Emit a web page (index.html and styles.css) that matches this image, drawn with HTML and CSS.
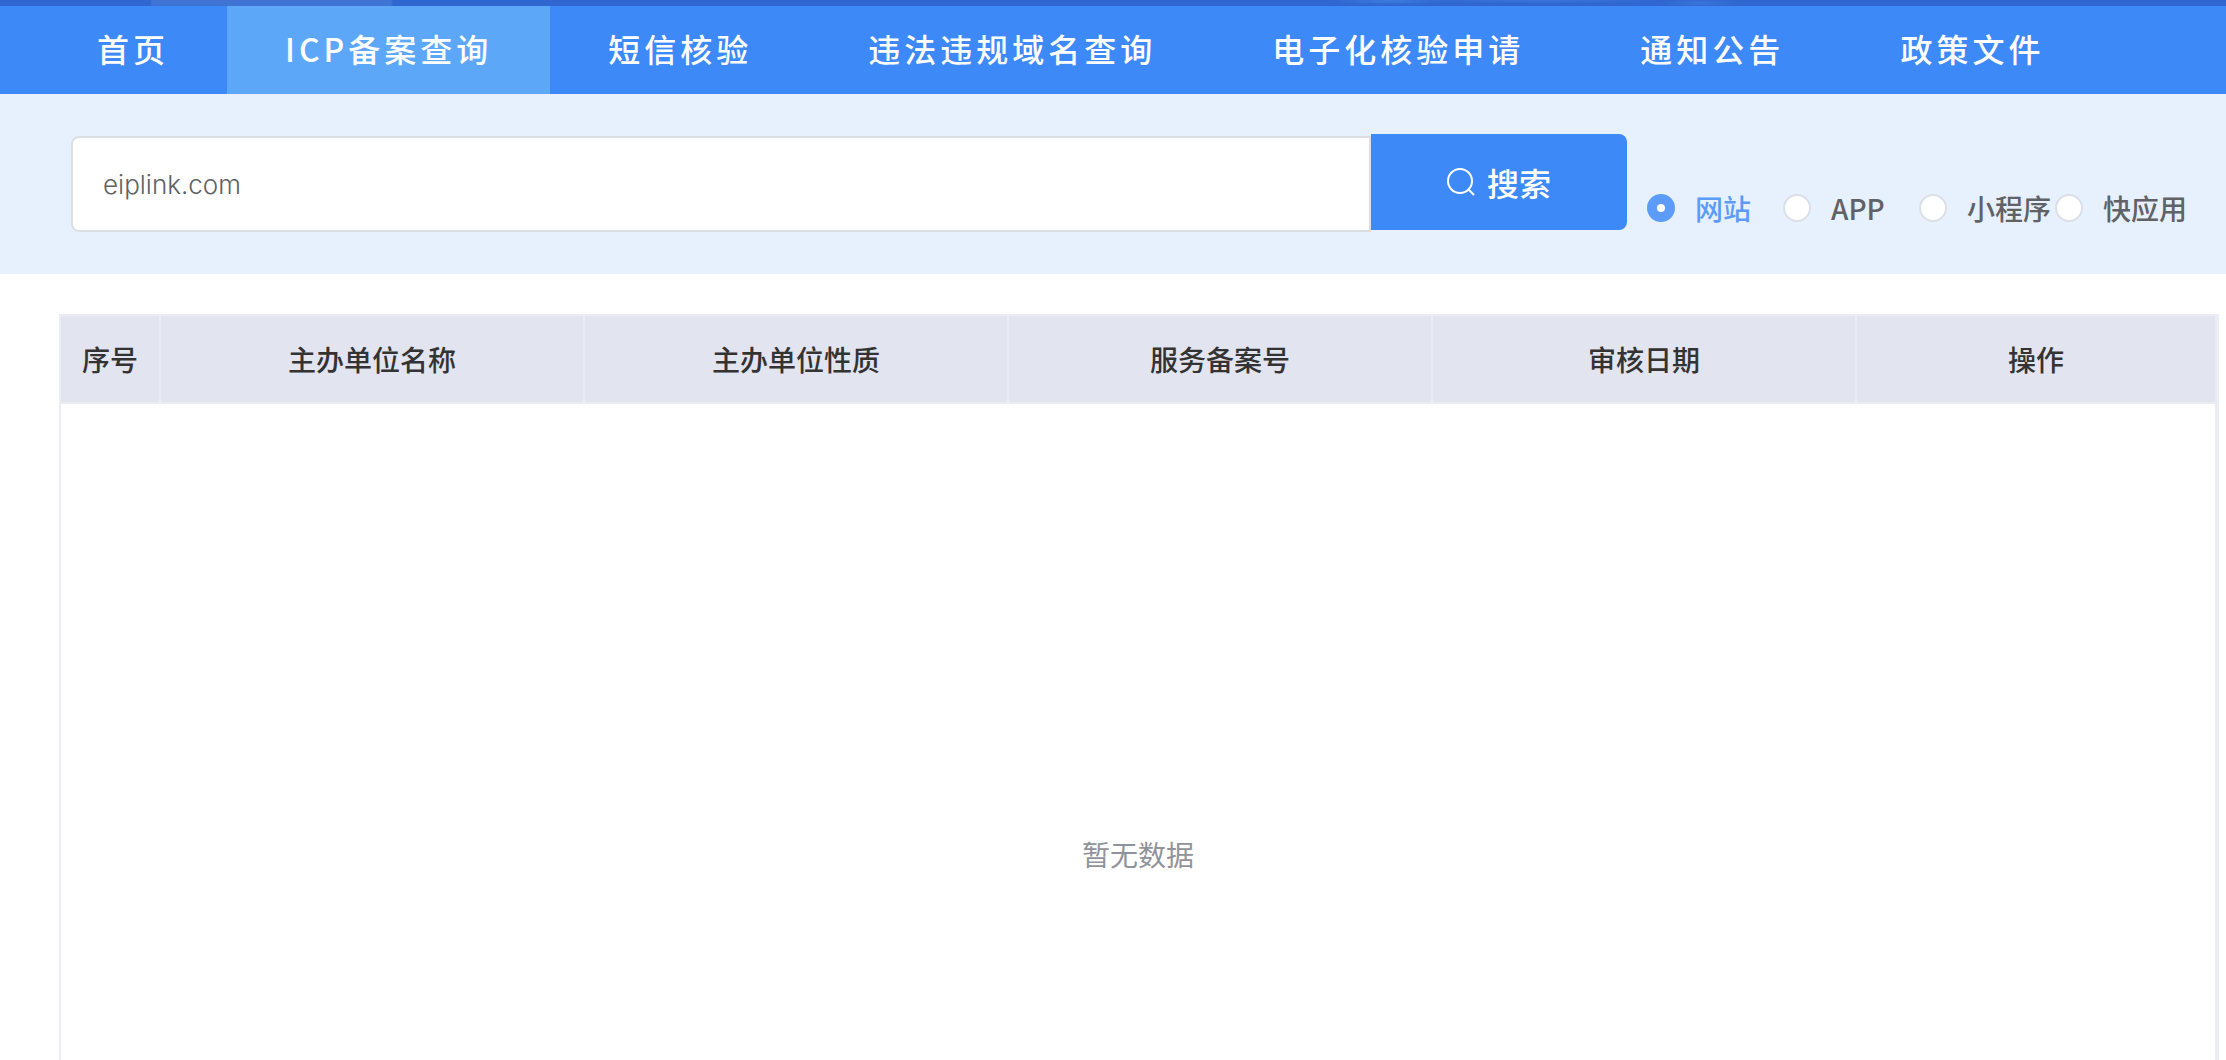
FILE: index.html
```html
<!DOCTYPE html>
<html lang="zh-CN">

<head>
  <meta charset="UTF-8">
  <meta name="viewport" content="width=device-width, initial-scale=1.0">
  <title>ICP备案查询</title>
  <link rel="stylesheet" href="styles.css">
</head>

<body>
  <div class="banner"></div>

  <!-- 导航栏 -->
  <nav class="nav">
    <a href="#" class="nav-item">首页</a>
    <a href="#" class="nav-item active">ICP备案查询</a>
    <a href="#" class="nav-item">短信核验</a>
    <a href="#" class="nav-item">违法违规域名查询</a>
    <a href="#" class="nav-item">电子化核验申请</a>
    <a href="#" class="nav-item">通知公告</a>
    <a href="#" class="nav-item">政策文件</a>
  </nav>

  <!-- 搜索区 -->
  <form class="search">
    <div class="search-box">
      <input type="text" class="search-input" value="eiplink.com" aria-label="查询内容">
      <button type="button" class="search-btn">
        <svg class="search-icon" viewBox="0 0 28 28" fill="none" stroke="currentColor" stroke-width="2" stroke-linecap="round">
          <circle cx="13" cy="13" r="12" />
          <path d="M21.5 21.5l5 5" />
        </svg>
        <span>搜索</span>
      </button>
    </div>
    <div class="types">
      <label class="type"><input type="radio" name="type" checked><span>网站</span></label>
      <label class="type"><input type="radio" name="type"><span>APP</span></label>
      <label class="type"><input type="radio" name="type"><span>小程序</span></label>
      <label class="type"><input type="radio" name="type"><span>快应用</span></label>
    </div>
  </form>

  <!-- 查询结果 -->
  <main class="result">
    <table class="result-table">
      <colgroup>
        <col class="col-index">
        <col class="col-main" span="4">
        <col>
      </colgroup>
      <thead>
        <tr>
          <th>序号</th>
          <th>主办单位名称</th>
          <th>主办单位性质</th>
          <th>服务备案号</th>
          <th>审核日期</th>
          <th>操作</th>
        </tr>
      </thead>
      <tbody>
        <tr>
          <td class="empty" colspan="6">暂无数据</td>
        </tr>
      </tbody>
    </table>
  </main>
</body>

</html>
```

FILE: styles.css
```css
:root {
  --blue: #3d89f7;
  --blue-active: #5ca7f8;
  --blue-light: #e7f1fe;
  --radio-blue: #5c9cf8;
  --line: #ebedf4;
  --head: #e2e4ef;
}

* {
  margin: 0;
  padding: 0;
  box-sizing: border-box;
}

body {
  height: 100vh;
  overflow: hidden;
  font-family: "Noto Sans CJK SC", sans-serif;
  font-size: 28px;
  color: #606266;
  background: #fff;
}

/* 顶部横幅底边，右侧有淡淡的光纹 */
.banner {
  height: 6px;
  background:
    radial-gradient(ellipse 60px 4px at 1390px 1px, #3c7cdc, transparent),
    radial-gradient(ellipse 120px 4px at 1540px 0, #3a76da, transparent),
    radial-gradient(ellipse 40px 4px at 1700px 3px, #3a76da, transparent),
    linear-gradient(90deg, #2f66d0 150px, #3f74d5 152px, #3f74d5 391px, #2f66d0 393px);
}

/* 导航栏 */
.nav {
  display: flex;
  height: 88px;
  padding-left: 39px;
  background: var(--blue);
}

.nav-item {
  padding: 0 58px;
  font-size: 32px;
  font-weight: 500;
  line-height: 84px;
  letter-spacing: 4px;
  white-space: nowrap;
  color: #fff;
  text-decoration: none;
}

.nav-item.active {
  background: var(--blue-active);
}

/* 搜索区 */
.search {
  display: flex;
  height: 180px;
  padding: 40px 35px 0 71px;
  background: var(--blue-light);
}

.search-box {
  flex: 1;
  display: flex;
  align-items: flex-start;
}

.search-input {
  flex: 1;
  min-width: 0;
  height: 96px;
  margin-top: 2px;
  padding: 0 30px;
  border: 2px solid #dcdfe2;
  border-radius: 8px 0 0 8px;
  background: #fff;
  font-family: Inter, "Noto Sans CJK SC", sans-serif;
  font-size: 26px;
  font-weight: 300;
  color: #606266;
  outline: none;
}

.search-btn {
  display: flex;
  align-items: center;
  justify-content: center;
  gap: 12px;
  width: 256px;
  height: 96px;
  border: none;
  border-radius: 0 8px 8px 0;
  background: var(--blue);
  color: #fff;
  font-family: inherit;
  font-size: 32px;
  font-weight: 500;
  cursor: pointer;
}

.search-icon {
  width: 28px;
  height: 28px;
}

.types {
  display: flex;
  height: 96px;
  margin: 26px 0 0 20px;
}

.type {
  display: flex;
  align-items: center;
  gap: 20px;
  width: 136px;
  height: 96px;
  font-weight: 500;
  white-space: nowrap;
  cursor: pointer;
}

.type input {
  flex: none;
  appearance: none;
  width: 28px;
  height: 28px;
  border: 2px solid #dcdfe6;
  border-radius: 50%;
  background: #fff;
}

.type input:checked {
  border: 10px solid var(--radio-blue);
}

.type input:checked + span {
  color: var(--radio-blue);
}

/* 查询结果 */
.result {
  padding: 40px 7px 0 59px;
}

.result-table {
  width: 100%;
  table-layout: fixed;
  border: 2px solid var(--line);
  border-spacing: 0;
}

.col-index {
  width: 100px;
}

.col-main {
  width: 424px;
}

.result-table th {
  height: 88px;
  border-right: 2px solid var(--line);
  border-bottom: 2px solid var(--line);
  background: var(--head);
  font-weight: 500;
  color: #333;
}

.result-table .empty {
  height: 900px;
  border-right: 2px solid var(--line);
  text-align: center;
  color: #909399;
}
```
